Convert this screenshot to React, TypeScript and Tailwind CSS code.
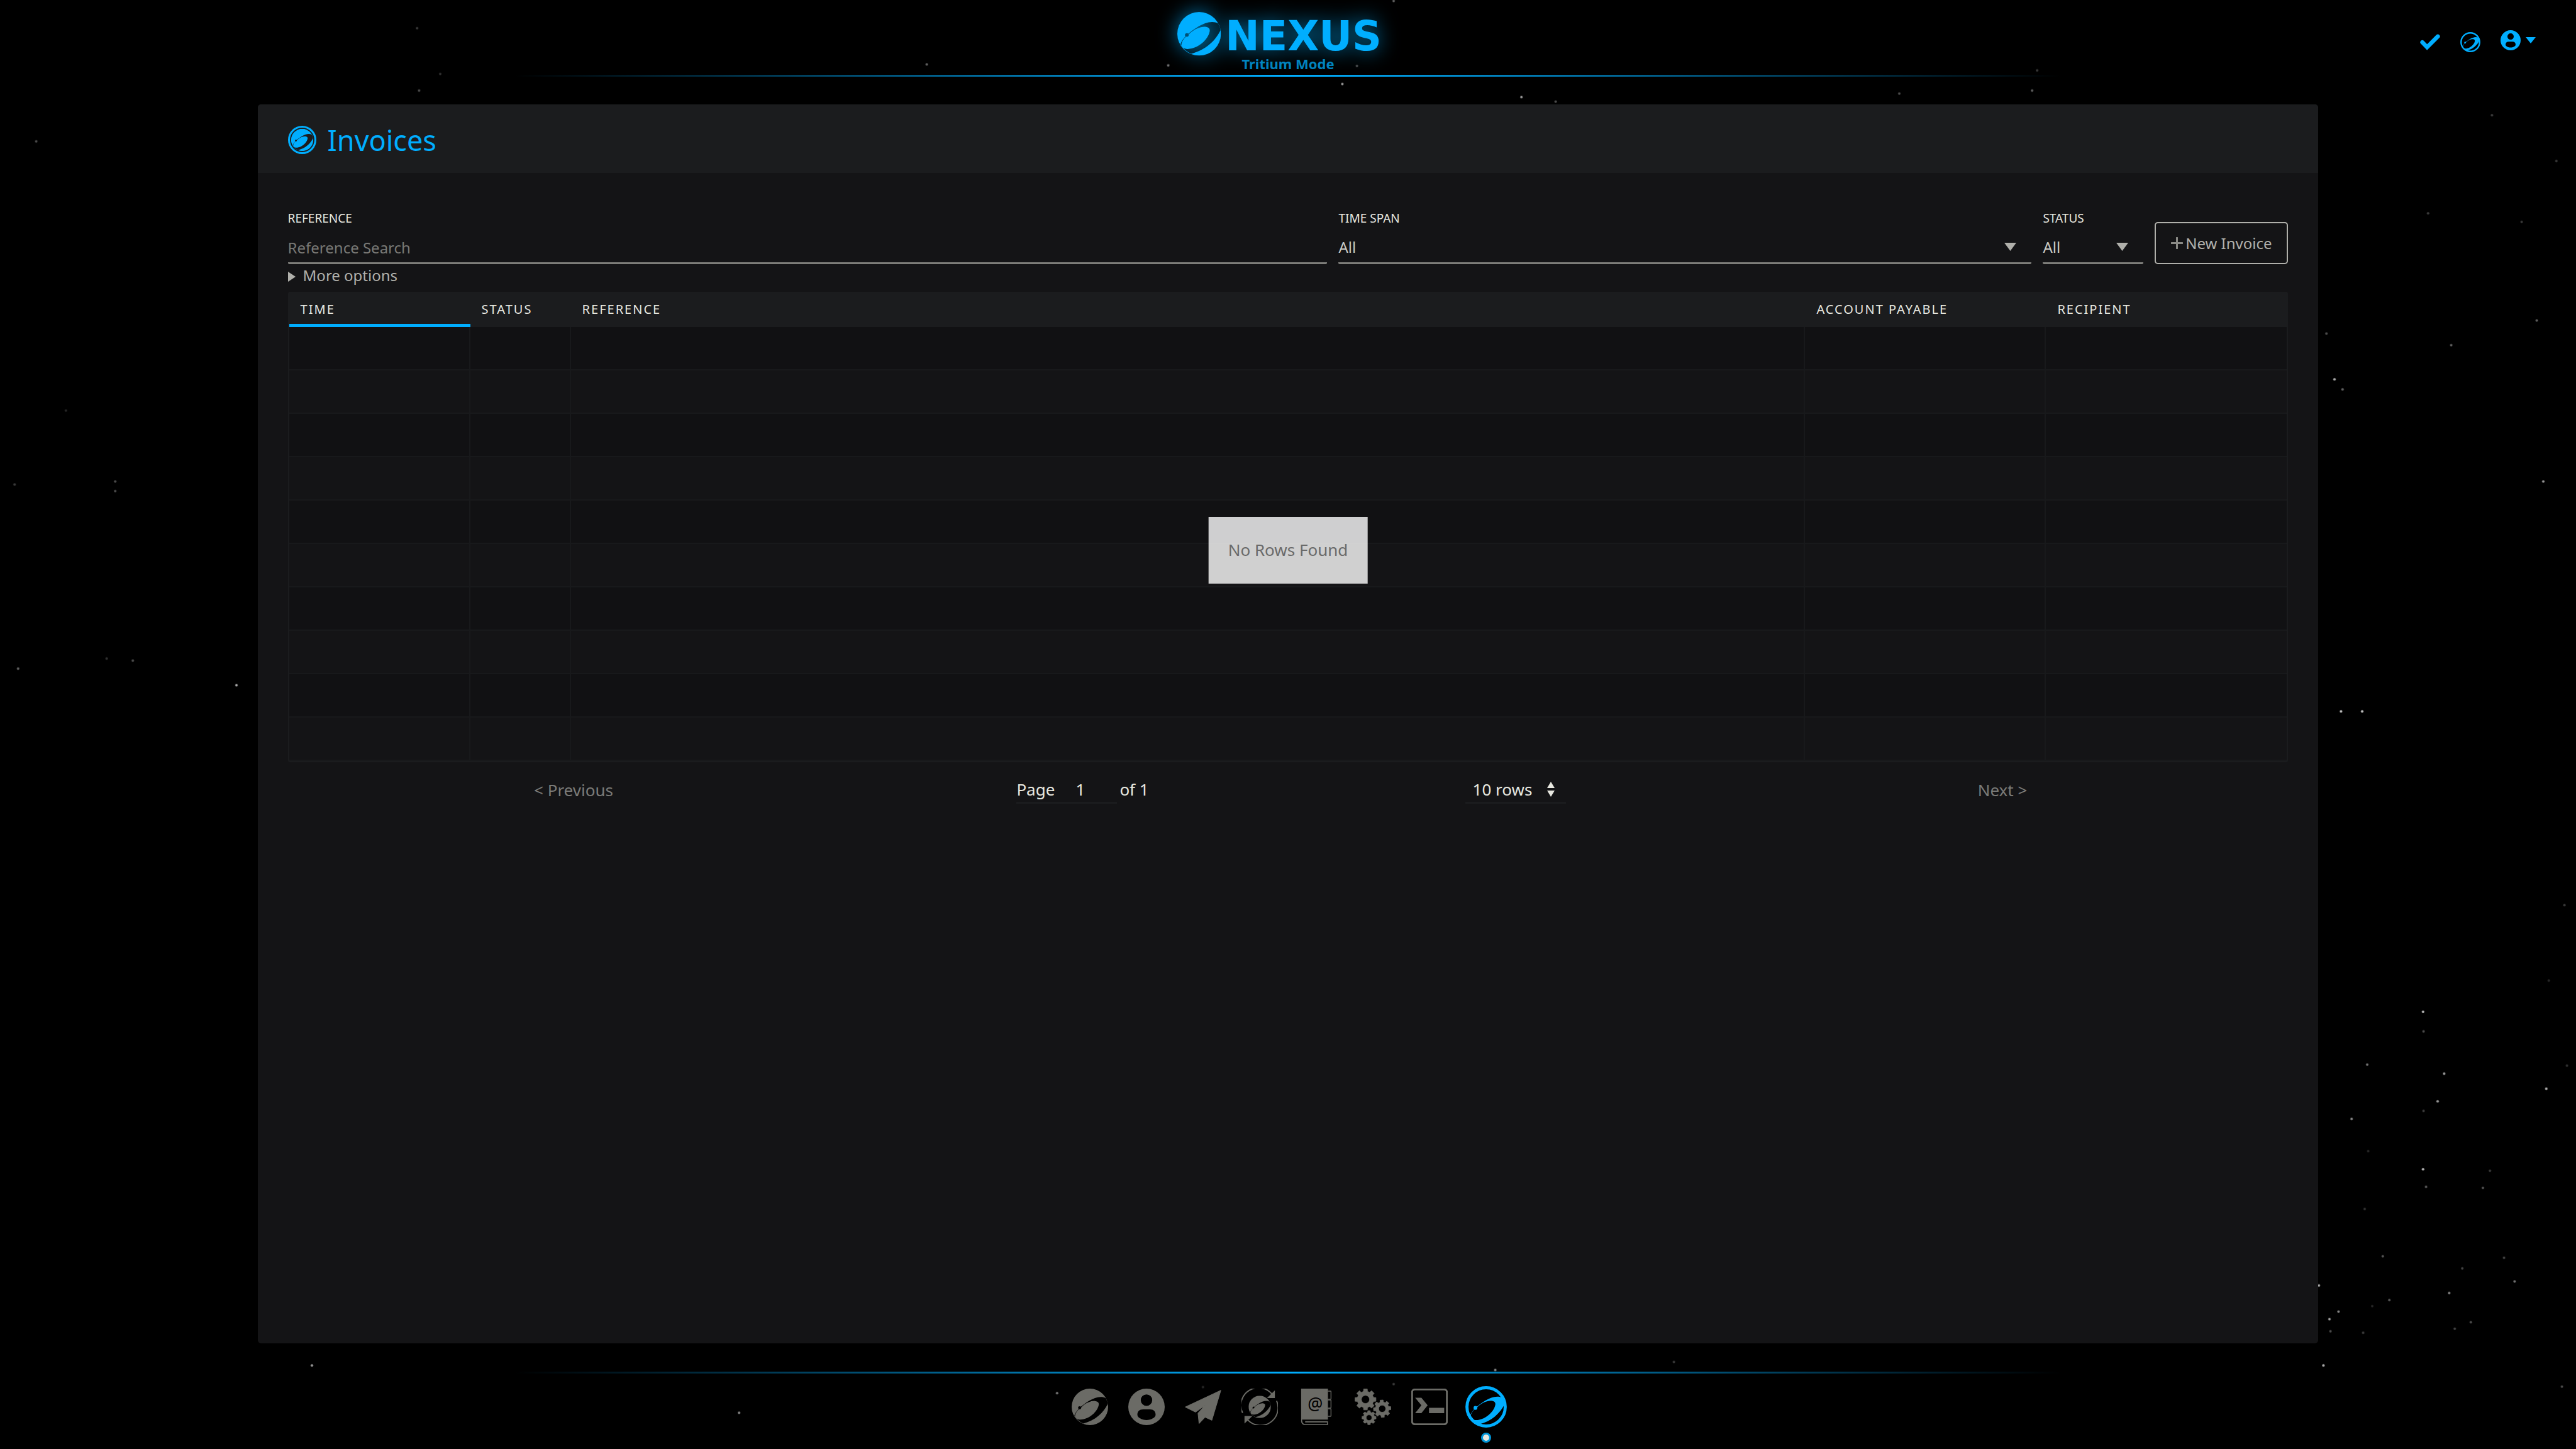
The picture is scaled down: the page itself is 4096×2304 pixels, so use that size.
import React, { useId } from "react";

const BLUE = "#00aeff";

/* Orbit ring around the planet, in a 260-unit box. */
const RING =
  "M57 137C100 100 185 36 244 69A130 130 0 0 1 258 108C228 172 168 228 83 249A130 130 0 0 1 19 192C26 172 38 157 57 137Z" +
  "M70 132C100 102 138 87 165 88C187 90 196 100 193 116C187 150 155 187 115 207C88 219 62 224 45 218C28 212 21 200 26 185C31 170 40 158 51 148Z";

function Planet() {
  const id = useId();
  return (
    <>
      <mask id={id} maskUnits="userSpaceOnUse" x="-10" y="-10" width="280" height="280">
        <circle cx="130" cy="130" r="130" fill="#fff" />
        <path d={RING} fillRule="evenodd" fill="#000" />
        <circle cx="57" cy="137" r="11" fill="#000" />
      </mask>
      <rect width="260" height="260" fill="currentColor" mask={`url(#${id})`} />
    </>
  );
}

function PlanetIcon() {
  return (
    <svg viewBox="0 0 260 260" className="size-full">
      <Planet />
    </svg>
  );
}

function OrbitIcon() {
  return (
    <svg viewBox="-12 -12 284 284" className="size-full">
      <circle cx="130" cy="130" r="131" fill="none" stroke="currentColor" strokeWidth="21" />
      <path d={RING} fillRule="evenodd" fill="currentColor" />
      <circle cx="57" cy="137" r="13" fill="currentColor" />
    </svg>
  );
}

function CoinIcon() {
  return (
    <svg viewBox="0 0 260 260" className="size-full">
      <circle cx="130" cy="130" r="121" fill="none" stroke="currentColor" strokeWidth="18" />
      <g transform="translate(28 28) scale(0.785)">
        <Planet />
      </g>
    </svg>
  );
}

function UserIcon() {
  return (
    <svg viewBox="0 0 216 216" className="size-full">
      <path
        fill="currentColor"
        fillRule="evenodd"
        d="M108 0a108 108 0 1 0 0 216a108 108 0 1 0 0-216ZM108 34a34 34 0 1 1 0 68a34 34 0 1 1 0-68ZM54 155C54 135 66 123 88 123H128C150 123 162 135 162 155C162 172 135 186 108 186C81 186 54 172 54 155Z"
      />
    </svg>
  );
}

function SendIcon() {
  return (
    <svg viewBox="0 0 216 216" className="size-full">
      <path
        fill="currentColor"
        stroke="currentColor"
        strokeWidth="4"
        strokeLinejoin="round"
        d="M213 10L160 187L119 169L84 206L78 146L122 97L63 139L3 109Z"
      />
    </svg>
  );
}

function ExchangeIcon() {
  return (
    <svg viewBox="0 0 216 216" className="size-full">
      <g fill="none" stroke="currentColor" strokeWidth="7">
        <path d="M7 144A104 104 0 0 1 182 34" />
        <path d="M208 72A104 104 0 0 1 36 184" />
      </g>
      <path fill="currentColor" d="M198 10V56H151ZM18 162H65L18 207Z" />
      <g transform="translate(42 42) scale(0.508)">
        <Planet />
      </g>
    </svg>
  );
}

function AddressBookIcon() {
  return (
    <svg viewBox="0 0 216 216" className="size-full">
      <path
        fill="currentColor"
        d="M18 0H177V183H18ZM18 183H24V190C26 202 32 210 42 210H171V200H42V193H177V216H42C26 216 18 205 18 190Z"
      />
      <g fill="none" stroke="currentColor" strokeWidth="5">
        <path d="M177 15H192Q195 15 195 18V60Q195 63 192 63H177" />
        <path d="M177 67H192Q195 67 195 70V112Q195 115 192 115H177" />
        <path d="M177 119H192Q195 119 195 122V161Q195 164 192 164H177" />
      </g>
      <text x="102" y="126" textAnchor="middle" fontSize="100" fontFamily="'Noto Sans', sans-serif" fill="#000">
        @
      </text>
    </svg>
  );
}

function gear(cx: number, cy: number, outer: number, body: number, hole: number, turn: number) {
  const at = (r: number, deg: number) => {
    const a = ((deg + turn) * Math.PI) / 180;
    return `${(cx + r * Math.sin(a)).toFixed(1)} ${(cy - r * Math.cos(a)).toFixed(1)}`;
  };
  const pts: string[] = [];
  for (let i = 0; i < 8; i++) {
    const c = i * 45;
    pts.push(at(body, c - 14), at(outer, c - 10), at(outer, c + 10), at(body, c + 14));
  }
  return `M${pts.join("L")}ZM${cx} ${cy - hole}a${hole} ${hole} 0 1 0 0 ${2 * hole}a${hole} ${hole} 0 1 0 0 ${-2 * hole}Z`;
}

function GearsIcon() {
  return (
    <svg viewBox="0 0 216 216" className="size-full">
      <g fill="currentColor" fillRule="evenodd" stroke="currentColor" strokeWidth="3" strokeLinejoin="round">
        <path d={gear(64, 64, 63, 49, 24, 0)} />
        <path d={gear(163, 119, 52, 40, 21, -4)} />
        <path d={gear(85, 172, 42, 33, 17, 0)} />
      </g>
    </svg>
  );
}

function TerminalIcon() {
  return (
    <svg viewBox="0 0 216 216" className="size-full">
      <rect x="5" y="5" width="206" height="206" rx="16" fill="none" stroke="currentColor" strokeWidth="11" />
      <path fill="currentColor" d="M23 54H60L97 99L60 145H23L60 99ZM105 114H195V145H105Z" />
    </svg>
  );
}

function Triangle({ className }: { className: string }) {
  return (
    <svg viewBox="0 0 10 10" preserveAspectRatio="none" className={className}>
      <path d="M0 0H10L5 10Z" fill="currentColor" />
    </svg>
  );
}

const STARS: [number, number, number][] = [
  [4816, 2011, 1], [4817, 2050, 0.4], [4705, 2116, 0.6], [4858, 2134, 0.8], [4845, 2189, 0.8], [4817, 2208, 0.3],
  [4674, 2224, 0.7], [5061, 2164, 0.9], [5102, 2118, 0.25], [4816, 2324, 0.95], [4822, 2359, 0.45], [4935, 2361, 0.45],
  [4949, 2327, 0.3], [4700, 2403, 0.25], [4736, 2497, 0.45], [4894, 2521, 0.35], [4977, 2500, 0.35], [4998, 2547, 0.6],
  [4868, 2570, 0.7], [4749, 2584, 0.45], [4648, 2607, 0.7], [4630, 2622, 0.85], [4632, 2646, 0.4], [4697, 2649, 0.3],
  [4911, 2628, 0.4], [4879, 2641, 0.35], [4618, 2714, 0.9], [5092, 2756, 0.4], [4609, 2555, 0.9], [5066, 1949, 0.2],
  [4707, 2288, 0.2], [4715, 2596, 0.2], [72, 281, 0.4], [131, 816, 0.2], [229, 957, 0.4], [229, 976, 0.4],
  [36, 1329, 0.5], [470, 1362, 0.9], [29, 963, 0.3], [264, 1313, 0.4], [212, 1309, 0.25], [833, 180, 0.4],
  [829, 56, 0.3], [875, 147, 0.25], [1842, 128, 0.5], [3024, 193, 0.8], [3092, 202, 0.4], [620, 2714, 0.8],
  [1469, 2808, 0.7], [3775, 186, 0.4], [4039, 180, 0.5], [4049, 140, 0.3], [4640, 754, 0.9], [4656, 774, 0.5],
  [5055, 957, 0.8], [5042, 637, 0.5], [4872, 686, 0.5], [4826, 424, 0.3], [5012, 441, 0.3], [4653, 1414, 1],
  [4695, 1414, 1], [5097, 1799, 0.3], [5081, 320, 0.3], [4953, 229, 0.3], [4624, 663, 0.4], [3327, 2707, 0.3],
  [2322, 130, 0.6], [2697, 131, 0.4], [2668, 167, 0.8], [2770, 2, 0.5], [2972, 2723, 0.7], [2170, 2795, 0.5],
  [2101, 2769, 0.6], [2391, 2757, 0.2], [2770, 2751, 0.3],
];

function Starfield() {
  return (
    <svg viewBox="0 0 5120 2880" preserveAspectRatio="none" className="absolute inset-0 -z-10 size-full" aria-hidden="true">
      {STARS.map(([x, y, o]) => (
        <g key={`${x}-${y}`} fill="#fff" opacity={o}>
          <circle cx={x} cy={y} r="3" opacity="0.35" />
          <circle cx={x} cy={y} r="2" opacity="0.6" />
        </g>
      ))}
    </svg>
  );
}

function Header() {
  return (
    <header>
      <div className="grid h-[119px] grid-cols-3 items-start">
        <div />
        <div className="flex flex-col items-center pt-[19px]">
          <svg
            viewBox="0 0 1320 262"
            role="img"
            aria-label="Nexus"
            className="h-[70px] w-[352px] overflow-visible text-[#00aeff] drop-shadow-[0_0_16px_rgba(0,174,255,0.7)]"
          >
            <Planet />
            <text
              x="286"
              y="227"
              fontSize="244"
              fontWeight="bold"
              fontFamily="'DejaVu Sans', sans-serif"
              fill={BLUE}
            >
              NEXUS
            </text>
          </svg>
          <div className="text-[22px] leading-6 font-bold text-[#0083bf]">Tritium Mode</div>
        </div>
        <div className="mt-[48px] flex items-start gap-8 justify-self-end pr-16 text-[#00aeff]">
          <button type="button" aria-label="Synchronized" className="mt-[3px] size-8">
            <svg viewBox="0 0 120 120" className="size-full">
              <path
                d="M14 61L42 90L106 26"
                fill="none"
                stroke="currentColor"
                strokeWidth="25"
                strokeLinecap="round"
              />
            </svg>
          </button>
          <button type="button" aria-label="Staking" className="mt-[3px] size-8">
            <OrbitIcon />
          </button>
          <button type="button" aria-label="Account" className="flex items-center gap-2">
            <span className="size-8">
              <UserIcon />
            </span>
            <Triangle className="h-[10px] w-4" />
          </button>
        </div>
      </div>
      <div className="mx-[20%] h-[3px] bg-linear-to-r from-transparent via-[#00aeff] to-transparent" />
    </header>
  );
}

function Select({ id, label }: { id: string; label: string }) {
  return (
    <div className="flex flex-col gap-2">
      <label htmlFor={id} className="text-[19px] leading-7 uppercase">
        {label}
      </label>
      <div className="relative">
        <select
          id={id}
          className="h-[51px] w-full appearance-none rounded-[2px] border-b-[3px] border-[#7e7e7a] bg-transparent text-[24px] text-[#cacac4]"
        >
          <option>All</option>
        </select>
        <Triangle className="pointer-events-none absolute top-[17px] right-6 h-[13px] w-[19px] text-[#b0b0ab]" />
      </div>
    </div>
  );
}

function Filters() {
  return (
    <form>
      <div className="grid grid-cols-[3fr_2fr_160px_212px] items-end gap-[18px]">
        <div className="flex flex-col gap-2">
          <label htmlFor="reference" className="text-[19px] leading-7 uppercase">
            Reference
          </label>
          <input
            id="reference"
            type="text"
            placeholder="Reference Search"
            className="h-[51px] w-full rounded-[2px] border-b-[3px] border-[#7e7e7a] bg-transparent text-[24px] placeholder:text-[#787875]"
          />
        </div>
        <Select id="timespan" label="Time span" />
        <Select id="status" label="Status" />
        <button
          type="button"
          className="flex h-[67px] items-center justify-center gap-1 rounded-[5px] border-2 border-[#b0b0ab] text-[24px] whitespace-nowrap text-[#b0b0ab]"
        >
          <svg viewBox="0 0 19 19" className="size-[19px] text-[#8a8a86]">
            <path d="M9.5 1V18M1 9.5H18" stroke="currentColor" strokeWidth="3" strokeLinecap="round" />
          </svg>
          New Invoice
        </button>
      </div>
      <button type="button" className="mb-2 flex h-9 items-center gap-3 text-[24px] leading-9 text-[#b0b0ab]">
        <svg viewBox="0 0 12 16" className="mt-1 h-4 w-3">
          <path d="M0 0L12 8L0 16Z" fill="currentColor" />
        </svg>
        More options
      </button>
    </form>
  );
}

const COLUMNS = [
  { name: "Time", width: "w-[288px]", sorted: true },
  { name: "Status", width: "w-[160px]", sorted: false },
  { name: "Reference", width: "", sorted: false },
  { name: "Account payable", width: "w-[383px]", sorted: false },
  { name: "Recipient", width: "w-[383px]", sorted: false },
];

function InvoiceTable() {
  return (
    <div className="relative">
      <table className="w-full table-fixed border-separate border-spacing-0 rounded-[3px] border-x-2 border-b-2 border-[#1b1c1e]">
        <thead>
          <tr className="h-14 bg-[#1b1c1e]">
            {COLUMNS.map((c) => (
              <th
                key={c.name}
                scope="col"
                className={`${c.width} ${
                  c.sorted ? "shadow-[inset_0_-5px_0_#00aeff]" : ""
                } px-[18px] text-left text-[20px] font-normal tracking-[2px] uppercase`}
              >
                {c.name}
              </th>
            ))}
          </tr>
        </thead>
        <tbody>
          {Array.from({ length: 10 }, (_, i) => (
            <tr key={i} className="h-[69px] odd:bg-[#111113] even:bg-[#141416]">
              {COLUMNS.map((c) => (
                <td key={c.name} className="border-r-2 border-b-2 border-[#18191b] last:border-r-0" />
              ))}
            </tr>
          ))}
        </tbody>
      </table>
      <div className="grid h-[73px] grid-cols-[2fr_3fr_2fr] items-center pt-4 text-[26px]">
        <button type="button" className="text-[#7b7b78]">
          &lt; Previous
        </button>
        <div className="flex items-start justify-between pr-[240px] pl-[250px]">
          <div className="flex items-start">
            <label className="flex w-40 items-center justify-between border-b-[3px] border-[#1b1c1e] leading-10">
              Page
              <input
                type="text"
                defaultValue="1"
                className="h-10 w-[92px] pl-[26px] text-[26px]"
              />
            </label>
            <span className="pl-1 leading-10">of 1</span>
          </div>
          <div className="relative w-40 border-b-[3px] border-[#1b1c1e]">
            <select aria-label="Rows per page" className="h-10 w-full appearance-none bg-transparent pl-3 text-[26px]">
              <option>10 rows</option>
            </select>
            <svg viewBox="0 0 12 24" className="pointer-events-none absolute top-2 right-[18px] h-6 w-3">
              <path d="M6 0L12 10H0ZM0 14H12L6 24Z" fill="currentColor" />
            </svg>
          </div>
        </div>
        <button type="button" className="text-[#7b7b78]">
          Next &gt;
        </button>
      </div>
      <div className="absolute top-1/2 left-1/2 flex h-[106px] -translate-1/2 items-center bg-white/80 px-[31px] text-[26px] whitespace-nowrap text-[#6a6a6a]">
        No Rows Found
      </div>
    </div>
  );
}

const NAV = [
  { name: "Overview", icon: PlanetIcon, active: false },
  { name: "User", icon: UserIcon, active: false },
  { name: "Send", icon: SendIcon, active: false },
  { name: "Transactions", icon: ExchangeIcon, active: false },
  { name: "Address Book", icon: AddressBookIcon, active: false },
  { name: "Settings", icon: GearsIcon, active: false },
  { name: "Console", icon: TerminalIcon, active: false },
  { name: "Invoices", icon: OrbitIcon, active: true },
];

function Footer() {
  return (
    <footer>
      <div className="mx-[20%] h-[3px] bg-linear-to-r from-transparent via-[#00aeff] to-transparent" />
      <nav className="flex h-[120px] items-start justify-center gap-8 pt-6">
        {NAV.map(({ name, icon: Icon, active }) => (
          <a
            key={name}
            href="#"
            aria-label={name}
            className={active ? "relative -m-1 block size-[66px] text-[#00aeff]" : "block size-[58px] text-[#6b6b66]"}
          >
            <Icon />
            {active && (
              <span className="absolute top-full left-1/2 mt-2 size-4 -translate-x-1/2 rounded-full border-[3px] border-[#0095d8] bg-[#e8e8e0]" />
            )}
          </a>
        ))}
      </nav>
    </footer>
  );
}

export default function App() {
  return (
    <div className="relative isolate flex min-h-screen flex-col bg-black font-['Noto_Sans',sans-serif] text-[#e8e8e0]">
      <Starfield />
      <Header />
      <main className="mx-auto mt-11 mb-[45px] flex w-4/5 flex-1 flex-col rounded-[5px] bg-[#141416]">
        <div className="flex h-[109px] items-center gap-[18px] rounded-t-[5px] bg-[#1b1c1e] px-12 pt-1 text-[#00aeff]">
          <span className="size-[45px]">
            <CoinIcon />
          </span>
          <h1 className="text-[45px] leading-none">Invoices</h1>
        </div>
        <div className="px-12 pt-[58px]">
          <Filters />
          <InvoiceTable />
        </div>
      </main>
      <Footer />
    </div>
  );
}
